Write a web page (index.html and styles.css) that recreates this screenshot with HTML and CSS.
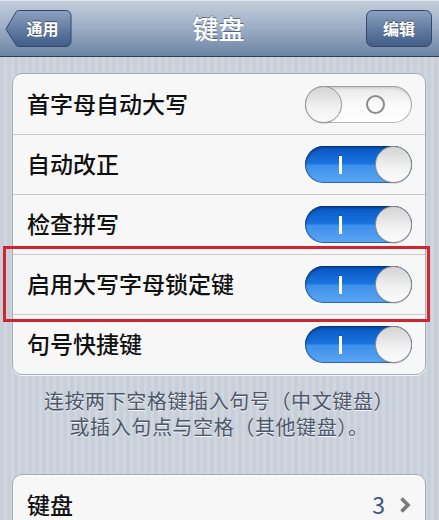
FILE: index.html
```html
<!DOCTYPE html>
<html lang="zh-CN">
<head>
  <meta charset="UTF-8">
  <meta name="viewport" content="width=device-width,initial-scale=1.0">
  <title>键盘</title>
  <link rel="stylesheet" href="styles.css">
</head>
<body>

  <!-- Навбар -->
  <header class="nav-bar">
    <button class="nav-btn back">
      <svg class="btn-shape" width="67" height="40" viewBox="0 0 67 40">
        <defs>
          <linearGradient id="backFill" x1="0" y1="0" x2="0" y2="1">
            <stop offset="0" stop-color="#8ea2bf"/>
            <stop offset="0.5" stop-color="#647da3"/>
            <stop offset="1" stop-color="#405c88"/>
          </linearGradient>
        </defs>
        <path d="M13.5 1.5 H61 a5 5 0 0 1 5 5 V32.5 a5 5 0 0 1 -5 5 H13.5 a3 3 0 0 1 -2.2 -1 L1.4 20.8 a1.4 1.4 0 0 1 0 -1.6 L11.3 2.5 a3 3 0 0 1 2.2 -1 Z"
              fill="url(#backFill)" stroke="#33476a" stroke-width="1"/>
      </svg>
      <span class="btn-label">通用</span>
    </button>

    <h1 class="nav-title">键盘</h1>

    <button class="nav-btn edit">
      <svg class="btn-shape" width="66" height="40" viewBox="0 0 66 40">
        <defs>
          <linearGradient id="editFill" x1="0" y1="0" x2="0" y2="1">
            <stop offset="0" stop-color="#8ea2bf"/>
            <stop offset="0.5" stop-color="#647da3"/>
            <stop offset="1" stop-color="#405c88"/>
          </linearGradient>
        </defs>
        <rect x="0.5" y="1.5" width="65" height="36" rx="6" fill="url(#editFill)" stroke="#33476a"/>
      </svg>
      <span class="btn-label">编辑</span>
    </button>
  </header>

  <main class="settings">
    <!-- Переключатели -->
    <ul class="group">
      <li class="cell">
        <span class="cell-label">首字母自动大写</span>
        <span class="switch off"><span class="knob"></span><span class="mark"></span></span>
      </li>
      <li class="cell">
        <span class="cell-label">自动改正</span>
        <span class="switch on"><span class="mark"></span><span class="knob"></span></span>
      </li>
      <li class="cell">
        <span class="cell-label">检查拼写</span>
        <span class="switch on"><span class="mark"></span><span class="knob"></span></span>
      </li>
      <li class="cell marked">
        <span class="cell-label">启用大写字母锁定键</span>
        <span class="switch on"><span class="mark"></span><span class="knob"></span></span>
      </li>
      <li class="cell">
        <span class="cell-label">句号快捷键</span>
        <span class="switch on"><span class="mark"></span><span class="knob"></span></span>
      </li>
    </ul>

    <p class="group-footer">连按两下空格键插入句号（中文键盘）<br>或插入句点与空格（其他键盘）。</p>

    <ul class="group">
      <li class="cell">
        <span class="cell-label">键盘</span>
        <span class="detail">3</span>
        <svg class="chevron" width="12" height="18" viewBox="0 0 12 18">
          <polyline points="2.5,2.5 9,9 2.5,15.5" fill="none" stroke="#7a7a7a" stroke-width="3.6"/>
        </svg>
      </li>
    </ul>
  </main>

</body>
</html>
```

FILE: styles.css
```css
/* Базовые стили */
* { margin:0; padding:0; box-sizing:border-box; }
body {
  width:439px; min-height:520px; overflow:hidden;
  font-family:"Noto Sans CJK SC","Noto Sans",sans-serif;
  background:repeating-linear-gradient(90deg,#c8cfd8 0 4px,#d0d6de 4px 7px);
}

/* Навбар */
.nav-bar {
  height:57px; padding:0 7px 0 5px;
  display:grid; grid-template-columns:1fr auto 1fr; align-items:center;
  background:linear-gradient(#c5cfdd,#9cadc5 50%,#6c83a3);
  border-bottom:1px solid #2f3d55;
  box-shadow:inset 0 1px 0 rgba(255,255,255,.5);
}
.nav-title {
  font-size:26px; font-weight:500; color:#fff; line-height:1;
  text-shadow:0 -1px 0 rgba(40,55,80,.6);
}
.nav-btn {
  display:grid; border:none; background:none; padding:0;
  font-family:inherit; cursor:pointer; margin-top:1px;
}
.nav-btn > * { grid-area:1/1; }
.nav-btn.back { justify-self:start; }
.nav-btn.edit { justify-self:end; }
.btn-shape { display:block; }
.btn-label {
  align-self:center; justify-self:center;
  font-size:16px; font-weight:700; color:#fff; line-height:1;
  text-shadow:0 -1px 0 rgba(0,0,0,.45); padding-bottom:2px;
}
.nav-btn.back .btn-label { padding-left:8px; }

/* Группы ячеек */
.settings { padding:16px 13px 0 12px; }
.group {
  list-style:none; background:#f7f7f7;
  border:1px solid #a7acb5; border-radius:10px;
  box-shadow:0 1px 0 rgba(255,255,255,.8);
}
.cell {
  height:60px; padding:0 13px 0 14px;
  display:flex; align-items:center; position:relative;
}
.cell + .cell { border-top:1px solid #c9c9c9; }
.cell-label {
  flex:1; font-size:23px; font-weight:500; color:#111; line-height:1;
  padding-bottom:2px;
}

/* Красная рамка вокруг строки */
.cell.marked::after {
  content:""; position:absolute;
  top:-9px; left:-10px; right:-5px; bottom:-8px;
  border:3px solid #cf2530;
}

/* Переключатель */
.switch {
  width:107px; height:37px; border-radius:19px;
  display:flex; align-items:center;
}
.switch.on {
  background:linear-gradient(#0756c4,#1b73dd 48%,#3d90ec 52%,#5ba6f2);
  box-shadow:inset 0 2px 3px rgba(0,0,0,.3), inset 0 0 0 1px rgba(10,60,140,.6);
}
.switch.off {
  background:linear-gradient(#e6e6e6,#fafafa 50%,#fff);
  box-shadow:inset 0 2px 3px rgba(0,0,0,.15), inset 0 0 0 1px #b6b6b6;
}
.knob {
  width:37px; height:37px; border-radius:50%; flex:none;
  background:linear-gradient(#d4d4d4,#f2f2f2 60%,#fbfbfb);
  border:1px solid #959595;
  box-shadow:0 1px 1px rgba(0,0,0,.15);
}
.mark { flex:1; display:flex; justify-content:center; }
.switch.on .mark::before {
  content:""; width:3px; height:18px; background:#fff;
  box-shadow:0 -1px 0 rgba(0,0,0,.15);
}
.switch.off .mark::before {
  content:""; width:15px; height:15px; border-radius:50%;
  border:2.5px solid #8c8c8c; margin-left:-3px;
}

/* Подпись под группой */
.group-footer {
  margin:13px 0 34px; text-align:center;
  font-size:20px; line-height:26px; letter-spacing:.6px; color:#4d576b;
  text-shadow:0 1px 0 rgba(255,255,255,.8);
}

/* Ячейка со значением */
.detail { font-size:23px; color:#385487; line-height:1; margin-right:14px; padding-bottom:2px; }
.chevron { display:block; margin-right:1px; }
```
